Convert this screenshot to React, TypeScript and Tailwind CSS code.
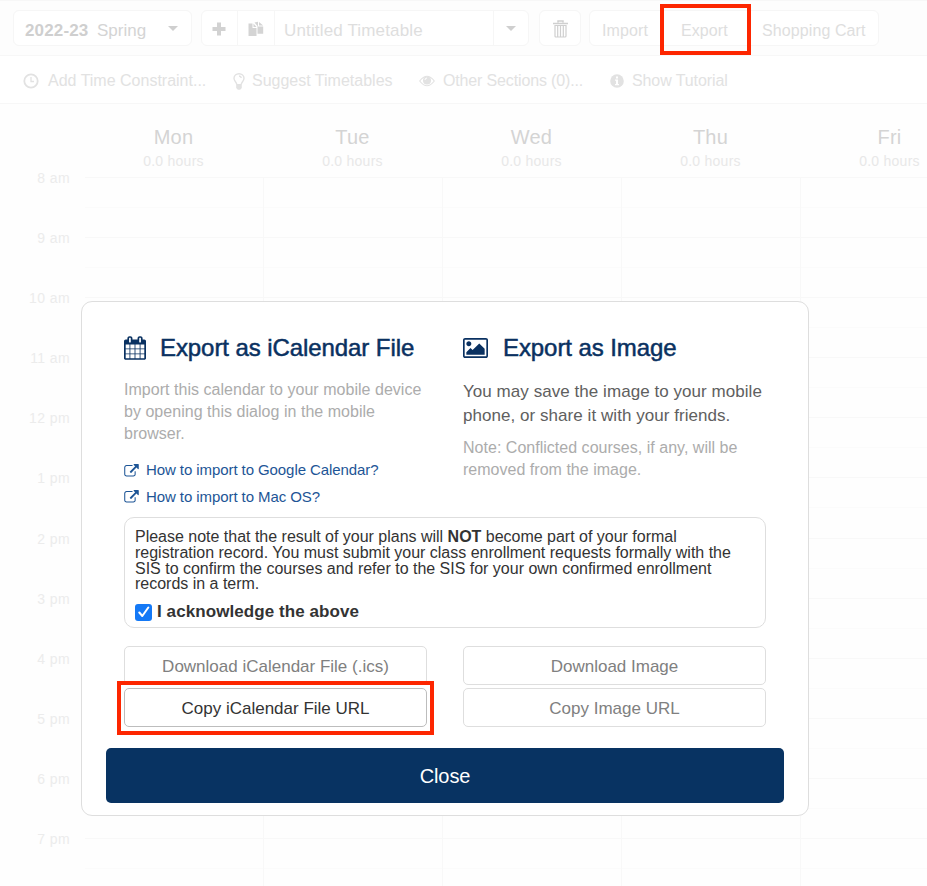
import React from "react";

const days = ["Mon", "Tue", "Wed", "Thu", "Fri"];
const hours = ["8 am", "9 am", "10 am", "11 am", "12 pm", "1 pm", "2 pm", "3 pm", "4 pm", "5 pm", "6 pm", "7 pm"];

const CalendarIcon = () => (
  <svg viewBox="64 0 1664 1792" className="h-[24px] w-[22px] shrink-0" fill="currentColor">
    <path d="M192 1664h288v-288h-288v288zm352 0h320v-288h-320v288zm-352-352h288v-320h-288v320zm352 0h320v-320h-320v320zm-352-384h288v-288h-288v288zm736 736h320v-288h-320v288zm-384-736h320v-288h-320v288zm768 736h288v-288h-288v288zm-384-352h320v-320h-320v320zm-352-864v-288q0-13-9.5-22.5t-22.5-9.5h-64q-13 0-22.5 9.5t-9.5 22.5v288q0 13 9.5 22.5t22.5 9.5h64q13 0 22.5-9.5t9.5-22.5zm736 864h288v-320h-288v320zm-384-384h320v-288h-320v288zm384 0h288v-288h-288v288zm32-480v-288q0-13-9.5-22.5t-22.5-9.5h-64q-13 0-22.5 9.5t-9.5 22.5v288q0 13 9.5 22.5t22.5 9.5h64q13 0 22.5-9.5t9.5-22.5zm384-64v1280q0 52-38 90t-90 38h-1408q-52 0-90-38t-38-90v-1280q0-52 38-90t90-38h128v-96q0-66 47-113t113-47h64q66 0 113 47t47 113v96h384v-96q0-66 47-113t113-47h64q66 0 113 47t47 113v96h128q52 0 90 38t38 90z" />
  </svg>
);
const ImageIcon = () => (
  <svg viewBox="-64 128 1920 1536" className="h-[20px] w-[25px] shrink-0" fill="currentColor">
    <path d="M576 576q0 80-56 136t-136 56-136-56-56-136 56-136 136-56 136 56 56 136zm1024 384v448h-1408v-192l320-320 160 160 512-512zm96-704h-1600q-13 0-22.5 9.5t-9.500 22.500v1216q0 13 9.500 22.500t22.500 9.500h1600q13 0 22.500-9.500t9.500-22.500v-1216q0-13-9.500-22.500t-22.500-9.500zm160 32v1216q0 66-47 113t-113 47h-1600q-66 0-113-47t-47-113v-1216q0-66 47-113t113-47h1600q66 0 113 47t47 113z" />
  </svg>
);
const ExternalIcon = () => (
  <svg viewBox="0 0 1792 1600" className="h-[13px] w-[15px] shrink-0" fill="currentColor">
    <path d="M1408 928v320q0 119-84.5 203.5t-203.5 84.5h-832q-119 0-203.5-84.5t-84.5-203.5v-832q0-119 84.5-203.5t203.5-84.5h704q14 0 23 9t9 23v64q0 14-9 23t-23 9h-704q-66 0-113 47t-47 113v832q0 66 47 113t113 47h832q66 0 113-47t47-113v-320q0-14 9-23t23-9h64q14 0 23 9t9 23zm384-864v512q0 26-19 45t-45 19-45-19l-176-176-652 652q-10 10-23 10t-23-10l-114-114q-10-10-10-23t10-23l652-652-176-176q-19-19-19-45t19-45 45-19h512q26 0 45 19t19 45z" />
  </svg>
);
const Caret = () => (
  <svg viewBox="0 0 10 5" className="h-[5px] w-[10px]" fill="#cfcfcf"><path d="M0 0h10L5 5z" /></svg>
);
const PlusIcon = () => (
  <svg viewBox="0 0 14 14" className="size-[14px]" fill="#d2d2d2"><path d="M5 .5h4V5h4.500v4H9v4.500H5V9H.5V5H5z" /></svg>
);
const CopyIcon = () => (
  <svg viewBox="0 0 16 16" className="size-4" fill="#d4d4d4">
    <path d="M.5 2.500h4v4.500h4v8h-8zM5.500 2.500L8.500 6h-3z" />
    <path d="M6.500 1.500L10 .8v4.700h5.200v7.300H9.500V5zM11 1l4.200 3.500H11z" />
  </svg>
);
const TrashIcon = () => (
  <svg viewBox="0 0 15 18" className="h-[18px] w-[15px]" fill="none" stroke="#cfcfcf">
    <path d="M5 2.500V1h5v1.500M0 3.500h15" strokeWidth="1.500" />
    <path d="M2 5.500h11V16q0 1-1 1H3q-1 0-1-1zM4.700 6v10.500M7.500 6v10.500M10.300 6v10.500" strokeWidth="1.200" />
  </svg>
);
const ClockIcon = () => (
  <svg viewBox="0 0 16 16" className="size-4" fill="none" stroke="currentColor">
    <circle cx="8" cy="8" r="6.700" strokeWidth="1.800" /><path d="M8 4v4.500h3" strokeWidth="1.300" />
  </svg>
);
const BulbIcon = () => (
  <svg viewBox="0 0 12 17" className="h-[17px] w-3" fill="none" stroke="currentColor" strokeWidth="1.400">
    <path d="M3.800 11.500C3.500 9 1 8.200 1 5.300a5 4.600 0 0 1 10 0C11 8.200 8.500 9 8.200 11.500M6 3q2 .2 2.300 2" />
    <path d="M3.200 11h5.600v4L7.200 16.800H4.800L3.200 15z" fill="currentColor" stroke="none" />
  </svg>
);
const EyeIcon = () => (
  <svg viewBox="0 0 16 12" className="h-3 w-4" fill="none" stroke="currentColor">
    <path d="M.7 6Q8-3.500 15.300 6 8 15.500.7 6z" strokeWidth="1.100" />
    <circle cx="8" cy="5.500" r="4" fill="currentColor" stroke="none" /><path d="M6 5q0-2 2-2" stroke="#fff" strokeWidth="1" />
  </svg>
);
const InfoIcon = () => (
  <svg viewBox="0 0 14 14" className="size-[14px]">
    <circle cx="7" cy="7" r="6.800" fill="currentColor" />
    <path d="M6 2.500h2v2H6zM5 5.500h3V10h1v1.300H5V10h1V6.800H5z" fill="#fff" />
  </svg>
);

function Toolbar() {
  return (
    <header className="flex h-14 items-start border-y border-[#f7f7f7] bg-[#fdfdfd] pt-[9px] pl-[13px] text-[#dedede]">
      <div className="flex h-9 w-[179px] items-center rounded-md border border-[#f6f6f6] bg-white pt-[5px] pl-[11px] text-[17px]">
        <b className="w-[72px] tracking-[0.15px] text-[#cfcfcf]">2022-23</b>
        <span className="text-[#d4d4d4]">Spring</span>
        <span className="ml-[22px] pb-1"><Caret /></span>
      </div>
      <div className="ml-[9px] flex h-9 w-[328px] items-center rounded-md border border-[#f6f6f6] bg-white text-[17px]">
        <span className="flex h-full w-9 items-center justify-center border-r border-[#f6f6f6] pt-[2px] pr-[2px]"><PlusIcon /></span>
        <span className="flex h-full w-[37px] items-center justify-center border-r border-[#f6f6f6] pt-[2px]"><CopyIcon /></span>
        <span className="w-[218px] pt-[5px] pl-[9px] tracking-[0.15px]">Untitled Timetable</span>
        <span className="flex h-full flex-1 items-center justify-center border-l border-[#f6f6f6] pt-[1px]"><Caret /></span>
      </div>
      <div className="ml-[10px] flex h-9 w-[42px] items-center justify-center rounded-md border border-[#f6f6f6] bg-white pt-[2px]"><TrashIcon /></div>
      <div className="ml-2 flex h-9 w-[290px] items-center rounded-md border border-[#f6f6f6] bg-white pt-[5px] pl-3 text-base tracking-[0.1px]">
        <span className="w-[79px]">Import</span>
        <span className="w-[81px]">Export</span>
        <span>Shopping Cart</span>
      </div>
    </header>
  );
}

function Actions() {
  return (
    <nav className="flex h-12 items-center border-b border-[#f7f7f7] bg-white pt-[3px] pl-[23px] text-base text-[#e2e2e2]">
      <ClockIcon /><span className="ml-[9px] w-[185px]">Add Time Constraint...</span>
      <BulbIcon /><span className="ml-[7px] w-[167px]">Suggest Timetables</span>
      <EyeIcon /><span className="ml-2 w-[167px] tracking-[-0.15px]">Other Sections (0)...</span>
      <InfoIcon /><span className="ml-2 tracking-[-0.1px]">Show Tutorial</span>
    </nav>
  );
}

function Timetable() {
  return (
    <section className="flex">
      <div className="w-[85px] shrink-0 pt-[64px] pr-[15px] text-right text-[14px] tracking-[0.4px] text-[#ececec]">
        {hours.map((h) => <div key={h} className="h-[60.1px] leading-5">{h}</div>)}
      </div>
      {days.map((d) => (
        <div key={d} className="w-[179px] shrink-0">
          <div className="h-[73px] pt-[20px] pr-[2px] text-center">
            <div className="text-[20px] leading-[26px] tracking-[0.2px] text-[#d4d4d4]">{d}</div>
            <div className="pt-[1px] text-[14px] leading-5 tracking-[0.25px] text-[#e8e8e8]">0.0 hours</div>
          </div>
          <div className="border-r border-[#f8f8f8]">
            {hours.map((h) => (
              <div key={h} className="h-[60.1px] border-t border-[#f8f8f8]"><div className="h-[30px] border-b border-[#fbfbfb]" /></div>
            ))}
          </div>
        </div>
      ))}
    </section>
  );
}

const buttonClass = "flex h-[39px] items-center justify-center rounded-[5px] border border-[#dedede] bg-white pt-[2px] text-[17px] text-[#808080]";

function ExportDialog() {
  return (
    <div className="absolute top-[301px] left-[81px] flex h-[515px] w-[728px] flex-col rounded-[11px] border border-[#dedede] bg-white px-[24px]">
      <div className="flex h-[215px] gap-[36px] px-[18px] pt-[31px]">
        <div className="w-[303px]">
          <h2 className="flex h-[30px] items-center text-[24px] text-[#0a3161]">
            <CalendarIcon /><span className="ml-[14px] tracking-[-0.08px] whitespace-nowrap [-webkit-text-stroke:0.5px]">Export as iCalendar File</span>
          </h2>
          <p className="mt-[16px] text-base leading-[22px] tracking-[0.03px] whitespace-nowrap text-[#acacac]">Import this calendar to your mobile device<br />by opening this dialog in the mobile<br />browser.</p>
          <div className="mt-[12px] text-[15px] tracking-[-0.08px] text-[#1d5596]">
            <div className="flex h-[26.500px] items-center"><ExternalIcon /><span className="ml-[7px] whitespace-nowrap">How to import to Google Calendar?</span></div>
            <div className="flex h-[26.500px] items-center"><ExternalIcon /><span className="ml-[7px] whitespace-nowrap">How to import to Mac OS?</span></div>
          </div>
        </div>
        <div className="w-[303px]">
          <h2 className="flex h-[30px] items-center text-[24px] text-[#0a3161]">
            <ImageIcon /><span className="ml-[15px] tracking-[-0.08px] whitespace-nowrap [-webkit-text-stroke:0.5px]">Export as Image</span>
          </h2>
          <p className="mt-[17px] text-[17px] leading-6 tracking-[0.05px] whitespace-nowrap text-[#606060]">You may save the image to your mobile<br />phone, or share it with your friends.</p>
          <p className="mt-[9px] text-base leading-[22px] tracking-[0.02px] whitespace-nowrap text-[#acacac]">Note: Conflicted courses, if any, will be<br />removed from the image.</p>
        </div>
      </div>
      <div className="mx-[18px] h-[111px] rounded-[10px] border border-[#dedede] pt-[11px] pl-[10px] text-[#333]">
        <p className="text-base leading-[15.8px] tracking-[-0.01px] whitespace-nowrap">
          Please note that the result of your plans will <b>NOT</b> become part of your formal<br />
          registration record. You must submit your class enrollment requests formally with the<br />
          SIS to confirm the courses and refer to the SIS for your own confirmed enrollment<br />
          records in a term.
        </p>
        <label className="mt-[10px] flex items-center text-[17px] leading-5 font-bold tracking-[0.08px]">
          <span className="mr-[5px] flex size-[17px] items-center justify-center rounded-[3px] bg-[#1479f6]">
            <svg viewBox="0 0 12 12" className="size-3" fill="none" stroke="#fff" strokeWidth="2" strokeLinecap="round" strokeLinejoin="round"><path d="M1.300 6.500l3 3.500 6-8.500" /></svg>
          </span>
          I acknowledge the above
        </label>
      </div>
      <div className="mx-[18px] mt-[18px] grid grid-cols-2 gap-x-[36px] gap-y-[3px]">
        <div className={buttonClass}>Download iCalendar File (.ics)</div>
        <div className={buttonClass}>Download Image</div>
        <div className="flex h-[39px] items-center justify-center rounded-[5px] border border-[#bdbdbd] bg-white pt-[2px] text-[17px] text-[#333]">Copy iCalendar File URL</div>
        <div className={buttonClass}>Copy Image URL</div>
      </div>
      <div className="mt-[21px] flex h-[55px] items-center justify-center rounded-[5px] bg-[#083362] text-[20px] tracking-[-0.1px] text-white">Close</div>
    </div>
  );
}

export default function App() {
  return (
    <main className="relative h-[886px] w-[927px] overflow-hidden bg-[#fefefe] font-['Liberation_Sans',Arial,sans-serif]">
      <Toolbar />
      <Actions />
      <Timetable />
      <ExportDialog />
      <div className="absolute top-[4px] left-[660px] h-[51px] w-[91px] border-4 border-[#fd2600]" />
      <div className="absolute top-[681px] left-[117px] h-[54px] w-[317px] border-4 border-[#fd2600]" />
    </main>
  );
}
